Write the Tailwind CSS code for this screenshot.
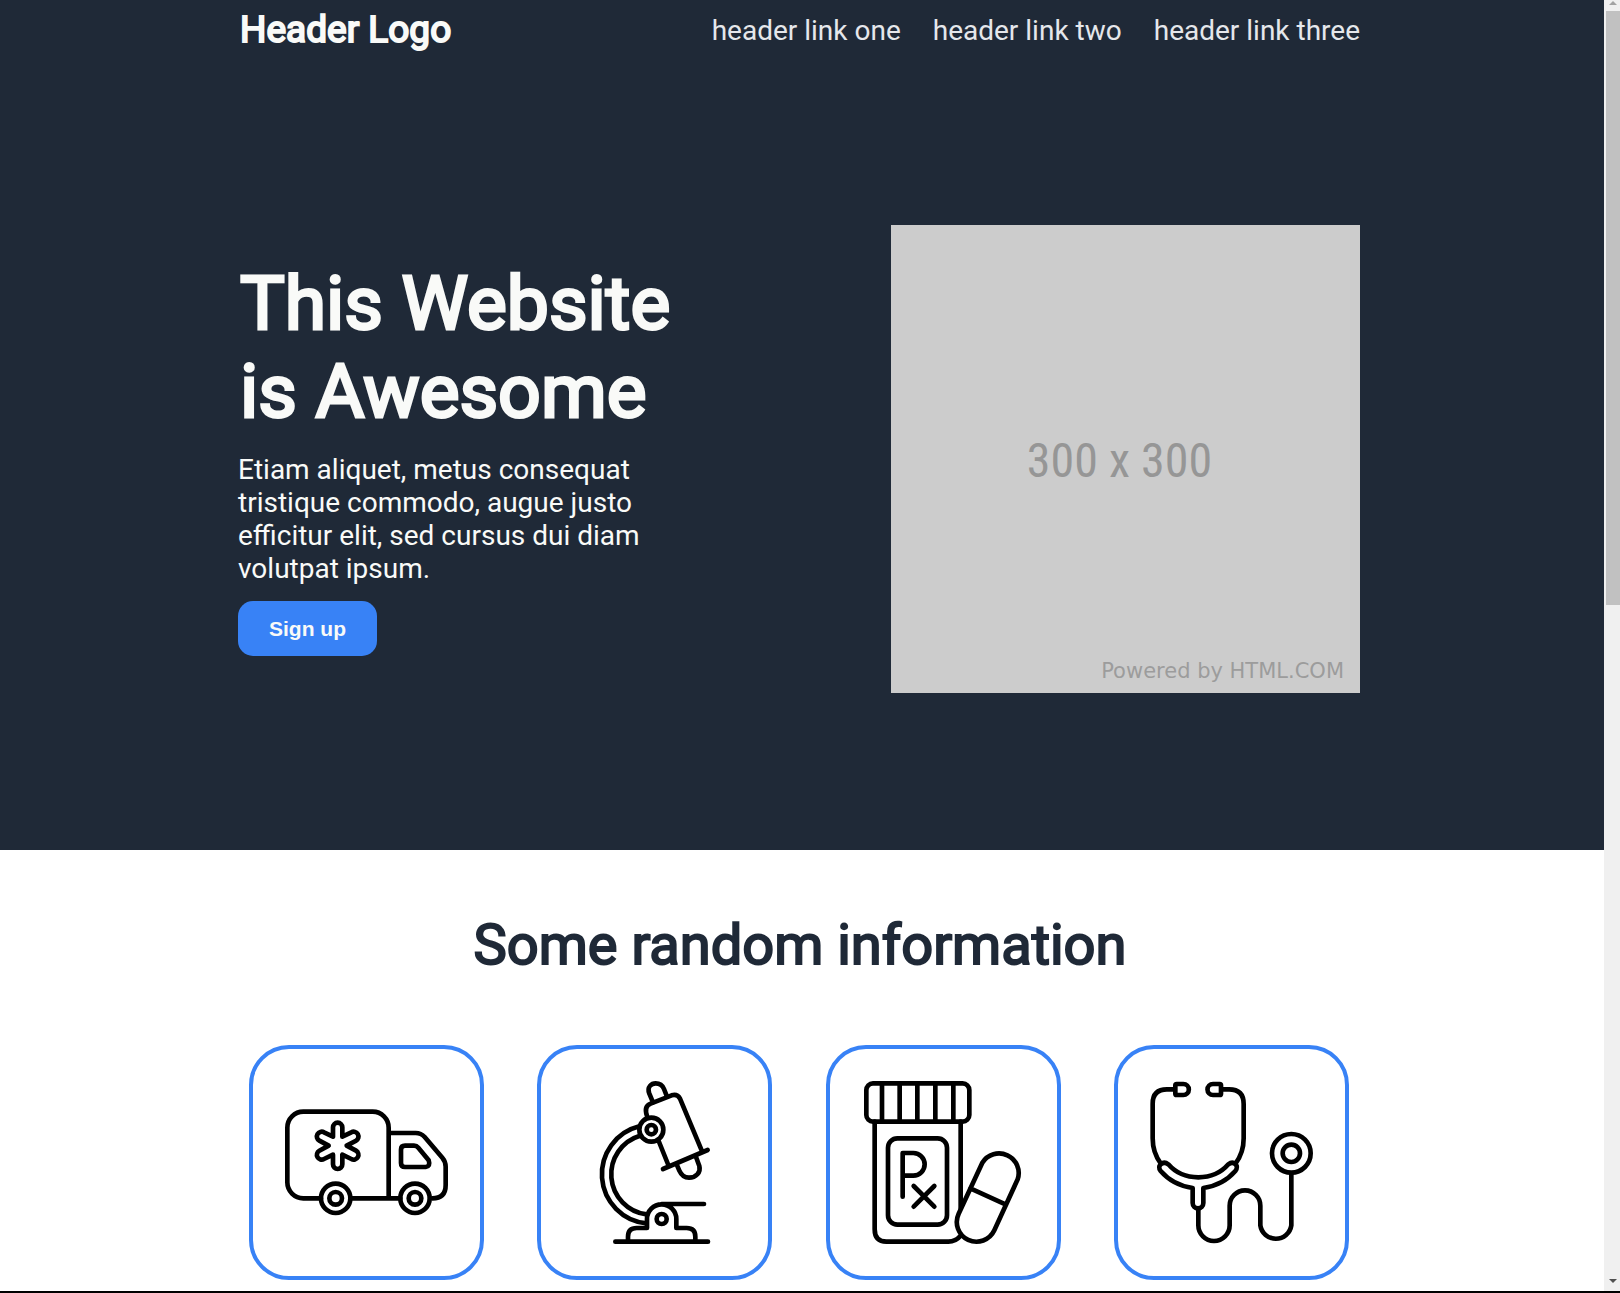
<!DOCTYPE html>
<html lang="en">
<head>
<meta charset="utf-8">
<title>Landing Page</title>
<script src="https://cdn.jsdelivr.net/npm/@tailwindcss/browser@4"></script>
</head>
<body class="bg-white font-[Roboto,sans-serif]">
<div class="flex min-h-screen flex-col border-b-2 border-black">
  <div class="flex flex-1">
    <div class="min-w-0 flex-1">
      <div class="bg-[#1f2937] pr-[244px] pl-[238px]">
        <header class="flex h-[60px] items-center justify-between">
          <a href="#" class="pl-0.5 text-[37px] text-[#f9faf8] [-webkit-text-stroke:2px_#f9faf8]">Header Logo</a>
          <nav class="flex gap-8 pt-0.5 text-[28px] text-[#e5e7eb]">
            <a href="#">header link one</a>
            <a href="#">header link two</a>
            <a href="#">header link three</a>
          </nav>
        </header>
        <section class="flex items-center justify-between pt-[165px] pb-[157px]">
          <div class="flex w-[450px] flex-col items-start pb-1">
            <h1 class="pl-0.5 text-[75px] leading-[88px] font-normal text-[#f9faf8] [-webkit-text-stroke:3px_#f9faf8]">This Website is Awesome</h1>
            <p class="mt-[18px] text-[28px] leading-[33px] text-[#f9faf8]">Etiam aliquet, metus consequat tristique commodo, augue justo efficitur elit, sed cursus dui diam volutpat ipsum.</p>
            <button type="button" class="mt-4 rounded-[15px] bg-[#3882f6] px-[31px] py-3 font-['Liberation_Sans',sans-serif] text-[21px] leading-[31px] font-bold text-[#f9faf8]">Sign up</button>
          </div>
          <div class="relative flex h-[468px] w-[469px] items-center justify-center bg-[#cccccc]">
            <span class="pt-1 pr-3 font-['Roboto_Condensed','Liberation_Sans',sans-serif] text-[48px] text-[#969696]">300 x 300</span>
            <span class="absolute right-4 bottom-1.5 font-['DejaVu_Sans',sans-serif] text-[21px] text-[#9c9c9c]">Powered by HTML.COM</span>
          </div>
        </section>
      </div>
      <section class="pt-[62px] pr-[244px] pb-[11px] pl-[238px]">
        <h2 class="pl-0.5 text-center text-[56px] leading-[66px] font-normal text-[#1f2937] [-webkit-text-stroke:2px_#1f2937]">Some random information</h2>
        <ul class="mt-[67px] flex justify-between px-[11px]">
          <li class="size-[235px] rounded-[40px] border-4 border-[#3882f6]">
            <svg class="size-full" viewBox="39 42 681 681" fill="none" stroke="#000" stroke-width="14" stroke-linecap="round" stroke-linejoin="round" aria-hidden="true">
              <path d="M243 490H190a48 48 0 0 1-48-48V278a48 48 0 0 1 48-48H398a48 48 0 0 1 48 48V490M331 490H481M446 294H527q16 0 27 12L607 368q10 12 10 27V450q0 40-40 40"/>
              <path d="M495 332H522q8 0 13 6L566 376q6 18-9 20H495q-12 0-12-12V344q0-12 12-12Z"/>
              <circle cx="287" cy="490" r="44"/><circle cx="287" cy="490" r="19"/>
              <circle cx="525" cy="490" r="44"/><circle cx="525" cy="490" r="19"/>
              <path d="M279 305V277a14 14 0 0 1 28 0V305L334 292a14 14 0 0 1 14 25L320 332L348 347a14 14 0 0 1-14 25L307 359V388a14 14 0 0 1-28 0V359L252 372a14 14 0 0 1-14-25L266 332L238 317a14 14 0 0 1 14-25Z"/>
            </svg>
          </li>
          <li class="size-[235px] rounded-[40px] border-4 border-[#3882f6]">
            <svg class="size-full" viewBox="33 42 681 681" fill="none" stroke="#000" stroke-width="14" stroke-linecap="round" stroke-linejoin="round" aria-hidden="true">
              <path d="M328 274A148 148 0 0 0 350 565M330 302A121 121 0 0 0 350 538"/>
              <circle cx="364" cy="284" r="36"/><circle cx="364" cy="284" r="14"/>
              <path d="M351 243Q341 214 362 206L425 181Q442 176 450 191L515 346M386 318L415 390M399 402L533 345"/>
              <path d="M369 202L358 176C350 155 365 145 377 145C390 145 398 152 402 162L411 185M440 388L448 407C456 425 468 428 477 428C498 428 513 412 508 393L497 363"/>
              <path d="M395 507H522M294 613V605q0-26 26-26H351V552a44 44 0 0 1 88 0V579H470q26 0 26 26V613M256 620H534"/>
              <circle cx="395" cy="552" r="15"/>
            </svg>
          </li>
          <li class="size-[235px] rounded-[40px] border-4 border-[#3882f6]">
            <svg class="size-full" viewBox="30 42 681 681" fill="none" stroke="#000" stroke-width="14" stroke-linecap="round" stroke-linejoin="round" aria-hidden="true">
              <rect x="139" y="145" width="309" height="115" rx="20"/>
              <path d="M186 145V260M239 145V260M292 145V260M346 145V260M400 145V260M164 260V583q0 37 35 37H385q22 0 36-17M422 260V520"/>
              <rect x="204" y="310" width="177" height="259" rx="28"/>
              <path d="M248 485V354H280a34 34 0 0 1 0 68H248M281 453L343 515M343 453L281 515"/>
              <path fill="#fff" d="M593 433A59 59 0 0 0 487 383L416 536A59 59 0 0 0 523 586ZM451 460L558 509"/>
            </svg>
          </li>
          <li class="size-[235px] rounded-[40px] border-4 border-[#3882f6]">
            <svg class="size-full" viewBox="39 42 681 681" fill="none" stroke="#000" stroke-width="14" stroke-linecap="round" stroke-linejoin="round" aria-hidden="true">
              <path d="M211 163H186q-43 0-43 43V310q0 43 24 75M348 163H372q44 0 44 44V310q0 43-24 75"/>
              <path fill="#fff" d="M215 147H235a16 16 0 0 1 0 33H215q-4 0-4-4V151q0-4 4-4ZM344 147H324a16 16 0 0 0 0 33H344q4 0 4-4V151q0-4-4-4Z"/>
              <path fill="#fff" d="M190 388C235 440 325 440 370 388C386 376 404 392 391 408C365 438 330 454 295 459V504a16 16 0 0 1-32 0V459C228 454 193 438 167 408C154 392 174 376 190 388Z"/>
              <path d="M280 521V571a47 47 0 0 0 94 0V512a46 46 0 0 1 92 0V571a47 47 0 0 0 93 0V415"/>
              <circle cx="559" cy="355" r="58"/><circle cx="559" cy="355" r="26"/>
            </svg>
          </li>
        </ul>
      </section>
    </div>
    <div class="flex w-4 flex-col items-end bg-[#f0f0f0]" aria-hidden="true">
      <div class="flex h-full w-[14px] flex-col items-center">
        <svg class="mt-px h-1 w-2" viewBox="0 0 8 4"><path d="M4 0L8 4H0Z" fill="#a3a3a3"/></svg>
        <div class="mt-[6px] h-[46%] w-full bg-[#c1c1c1]"></div>
        <svg class="mt-auto mb-2 h-1 w-2" viewBox="0 0 8 4"><path d="M0 0H8L4 4Z" fill="#505050"/></svg>
      </div>
    </div>
  </div>
</div>
</body>
</html>
